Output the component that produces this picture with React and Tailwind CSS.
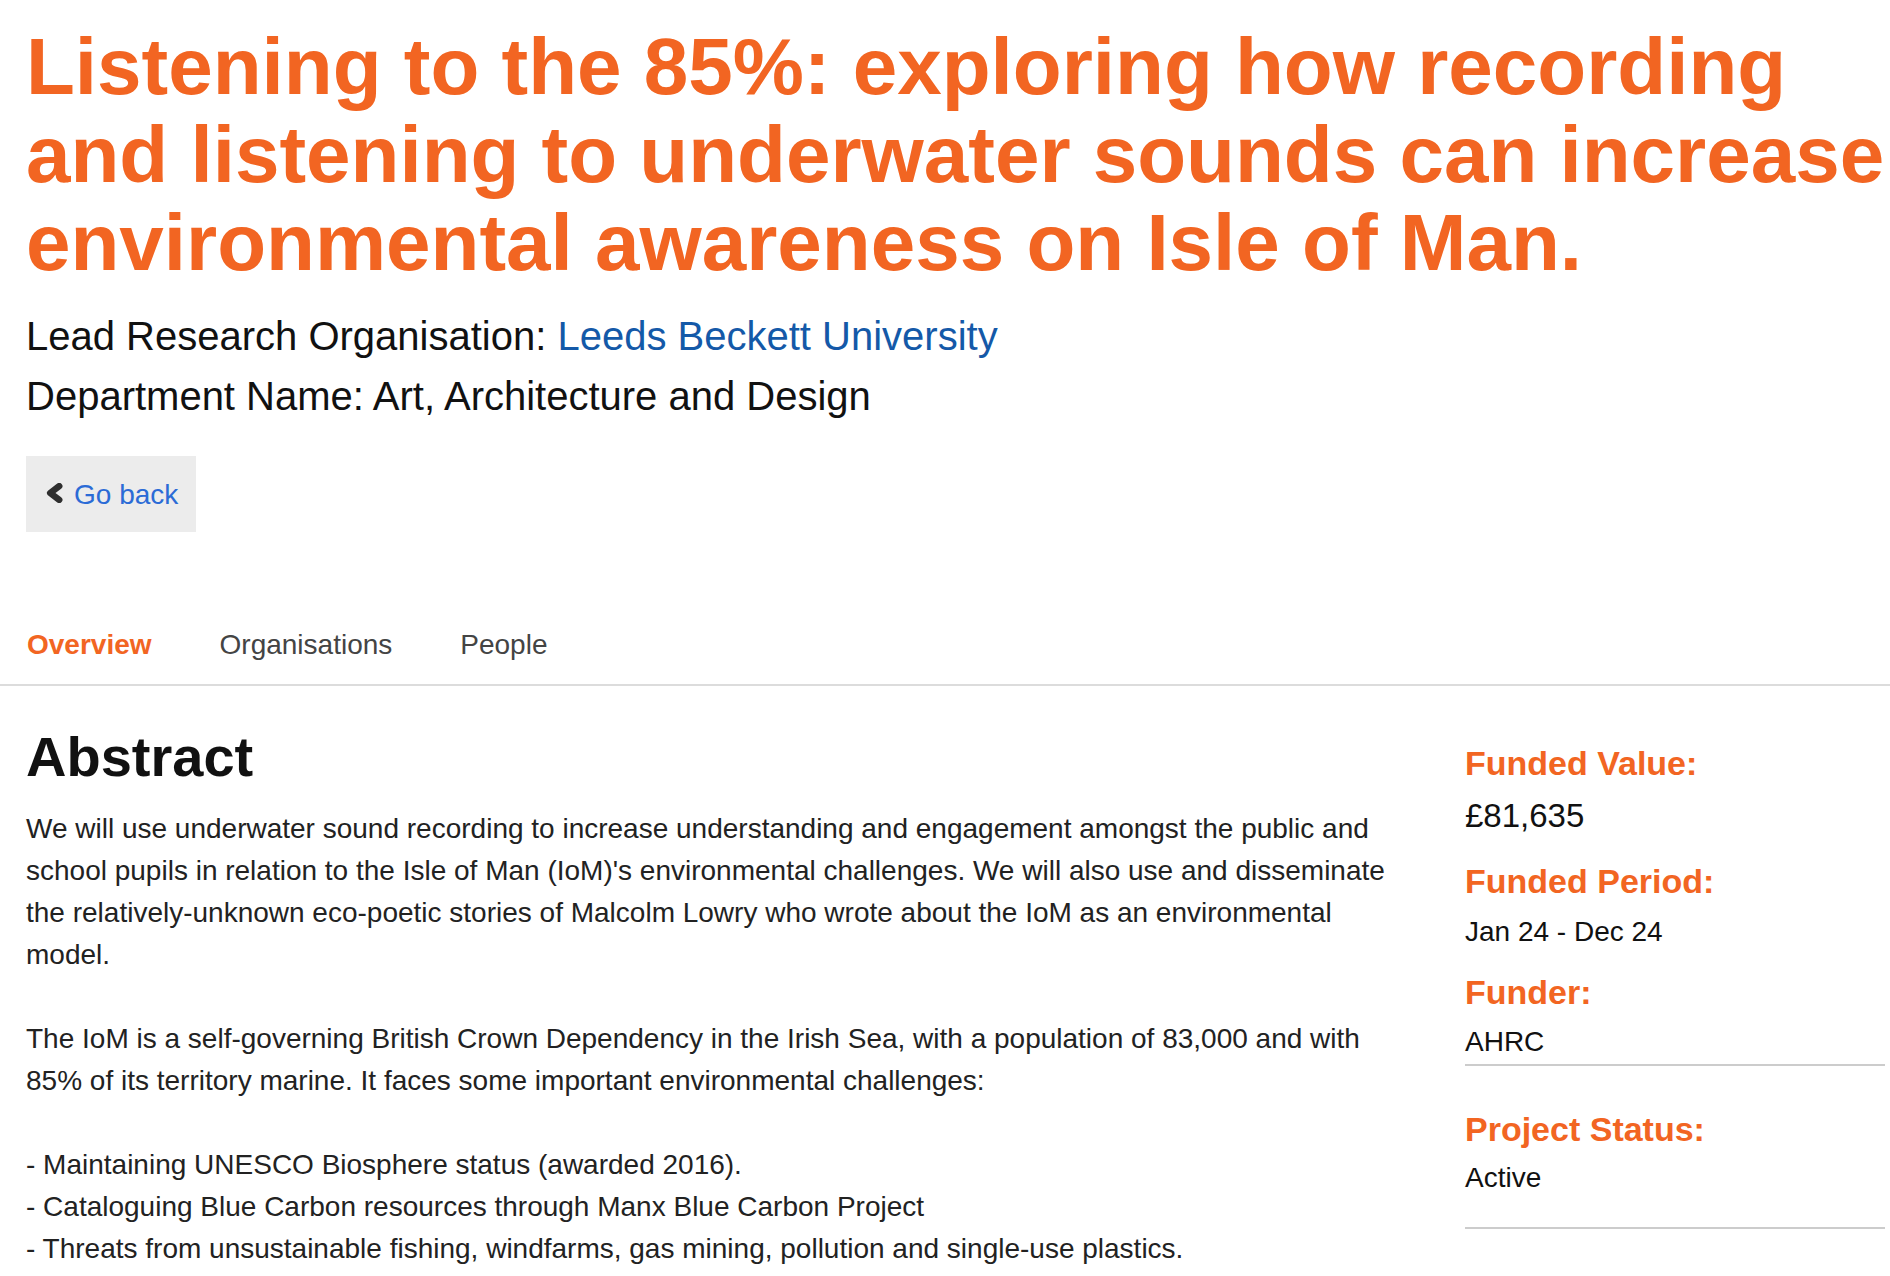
export default function App() {
  return (
    <div className="min-h-screen bg-white font-['Liberation_Sans',Arial,Helvetica,sans-serif] text-[#111]">
      <div className="pl-[26px]">
        <h1 className="pt-[23px] text-[80px] leading-[88px] font-bold text-[#f26522] whitespace-nowrap">
          Listening to the 85%: exploring how recording
          <br />
          and listening to underwater sounds can increase
          <br />
          environmental awareness on Isle of Man.
        </h1>
        <div className="mt-[20px] text-[40px] leading-[58px] text-[#111]">
          <div>
            Lead Research Organisation:{" "}
            <a className="text-[#1459a8] cursor-pointer">Leeds Beckett University</a>
          </div>
          <div className="mt-[2px]">Department Name: Art, Architecture and Design</div>
        </div>
        <div className="mt-[31px] inline-flex items-center bg-[#ececec] pl-[20px] pr-[18px] pt-[18px] pb-[16px] text-[28px] leading-[42px] text-[#2b6bd6] cursor-pointer">
          <svg width="17" height="20" viewBox="0 0 17 20" className="mr-[11px] mb-[5px]" aria-hidden="true">
            <polyline points="13.2,3.2 4.2,10 13.2,16.8" fill="none" stroke="#2f2f2f" strokeWidth="6.5" strokeLinecap="round" strokeLinejoin="round" />
          </svg>
          <span>Go back</span>
        </div>
      </div>

      <nav className="mt-[92px] flex gap-[68px] border-b-2 border-[#dcdcdc] pl-[27px] pb-[18px] text-[28px] leading-[42px]">
        <span className="font-bold text-[#f26522]">Overview</span>
        <span className="text-[#444]">Organisations</span>
        <span className="text-[#444]">People</span>
      </nav>

      <div className="flex pl-[26px]">
        <main className="w-[1374px] shrink-0">
          <h2 className="mt-[39px] text-[56px] leading-[64px] font-bold text-[#111]">Abstract</h2>
          <p className="mt-[19px] text-[28px] leading-[42px] text-[#222]">
            We will use underwater sound recording to increase understanding and engagement amongst the public and school pupils in relation to the Isle of Man (IoM)'s environmental challenges. We will also use and disseminate the relatively-unknown eco-poetic stories of Malcolm Lowry who wrote about the IoM as an environmental model.
            <br />
            <br />
            The IoM is a self-governing British Crown Dependency in the Irish Sea, with a population of 83,000 and with 85% of its territory marine. It faces some important environmental challenges:
            <br />
            <br />
            - Maintaining UNESCO Biosphere status (awarded 2016).
            <br />
            - Cataloguing Blue Carbon resources through Manx Blue Carbon Project
            <br />
            - Threats from unsustainable fishing, windfarms, gas mining, pollution and single-use plastics.
          </p>
        </main>
        <aside className="ml-[65px] w-[420px] shrink-0">
          <div className="mt-[57px] text-[34px] leading-[40px] font-bold text-[#f26522]">Funded Value:</div>
          <div className="mt-[13px] text-[33px] leading-[40px] text-[#111]">£81,635</div>
          <div className="mt-[25px] text-[34px] leading-[40px] font-bold text-[#f26522]">Funded Period:</div>
          <div className="mt-[11px] text-[28px] leading-[40px] text-[#111]">Jan 24 - Dec 24</div>
          <div className="mt-[20px] text-[34px] leading-[40px] font-bold text-[#f26522]">Funder:</div>
          <div className="mt-[10px] pb-[2px] border-b-2 border-[#cccccc] text-[28px] leading-[40px] text-[#111]">AHRC</div>
          <div className="mt-[43px] text-[34px] leading-[40px] font-bold text-[#f26522]">Project Status:</div>
          <div className="mt-[9px] pb-[29px] border-b-2 border-[#cccccc] text-[28px] leading-[40px] text-[#111]">Active</div>
        </aside>
      </div>
    </div>
  );
}
